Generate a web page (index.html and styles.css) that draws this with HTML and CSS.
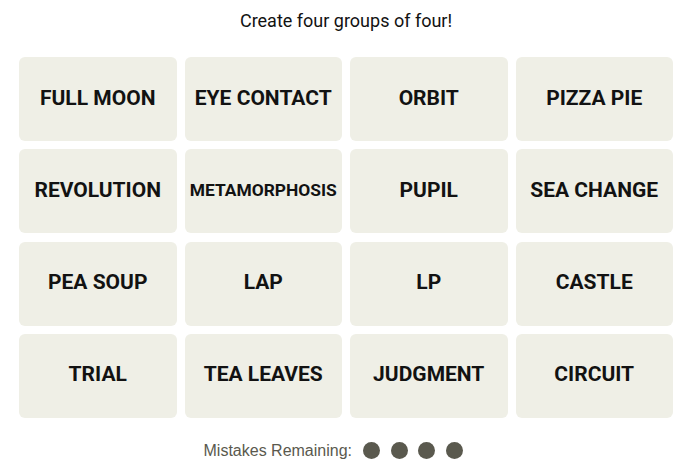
FILE: index.html
```html
<!DOCTYPE html>
<html>
<head>
<meta charset="utf-8">
<link rel="stylesheet" href="styles.css">
</head>
<body>
<main class="game">
  <p class="prompt">Create four groups of four!</p>
  <section class="board">
    <button class="tile">FULL MOON</button>
    <button class="tile">EYE CONTACT</button>
    <button class="tile">ORBIT</button>
    <button class="tile">PIZZA PIE</button>
    <button class="tile">REVOLUTION</button>
    <button class="tile tile-small">METAMORPHOSIS</button>
    <button class="tile">PUPIL</button>
    <button class="tile">SEA CHANGE</button>
    <button class="tile">PEA SOUP</button>
    <button class="tile">LAP</button>
    <button class="tile">LP</button>
    <button class="tile">CASTLE</button>
    <button class="tile">TRIAL</button>
    <button class="tile">TEA LEAVES</button>
    <button class="tile">JUDGMENT</button>
    <button class="tile">CIRCUIT</button>
  </section>
  <div class="mistakes">
    <span class="mistakes-label">Mistakes Remaining:</span>
    <span class="dots">
      <span class="dot"></span><span class="dot"></span><span class="dot"></span><span class="dot"></span>
    </span>
  </div>
</main>
</body>
</html>
```

FILE: styles.css
```css
html, body {
  margin: 0;
  padding: 0;
  background: #ffffff;
}

.game {
  width: 654px;
  margin-left: 19px;
  font-family: Roboto, "Liberation Sans", Arial, sans-serif;
  color: #121212;
}

.prompt {
  margin: 0;
  padding-top: 11px;
  height: 57px;
  box-sizing: border-box;
  text-align: center;
  font-size: 18px;
  line-height: 20px;
}

.board {
  display: grid;
  grid-template-columns: repeat(4, 1fr);
  grid-auto-rows: 84px;
  gap: 8px 8px;
  row-gap: 8.3px;
}

.tile {
  border: none;
  border-radius: 6px;
  background: #efefe6;
  color: #121212;
  font-family: Roboto, "Liberation Sans", sans-serif;
  font-weight: 700;
  font-size: 21px;
  padding: 0 0 3px;
  margin: 0;
  text-align: center;
}

.tile-small {
  font-size: 17.4px;
}

.mistakes {
  display: flex;
  justify-content: center;
  align-items: center;
  gap: 11px;
  margin-top: 24px;
  height: 18px;
  padding-right: 26px;
}

.mistakes-label {
  font-size: 16px;
  color: #5a594e;
  font-family: "Liberation Sans", Arial, sans-serif;
}

.dots {
  display: flex;
  gap: 10.5px;
}

.dot {
  width: 17px;
  height: 17px;
  border-radius: 50%;
  background: #5a594e;
}
```
